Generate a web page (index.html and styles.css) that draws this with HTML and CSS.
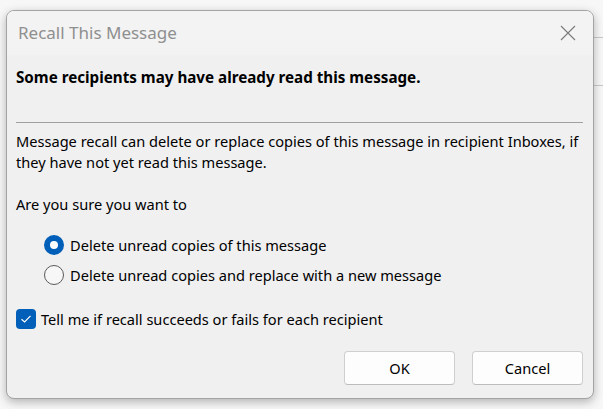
FILE: index.html
```html
<!DOCTYPE html>
<html lang="en">
<head>
<meta charset="utf-8">
<title>Recall This Message</title>
<link rel="stylesheet" href="styles.css">
</head>
<body>
<div class="desktop">
  <svg class="backdrop" width="40" height="80" viewBox="0 0 40 80" aria-hidden="true">
    <line x1="0" y1="7.5" x2="40" y2="7.5" stroke="#c9c9c9" stroke-width="1"/>
    <line x1="0" y1="55.5" x2="40" y2="55.5" stroke="#c9c9c9" stroke-width="1"/>
    <circle cx="8" cy="34" r="8" fill="none" stroke="#a33fc0" stroke-width="1.6"/>
  </svg>
  <div class="dialog">
    <div class="titlebar">
      <span class="title">Recall This Message</span>
      <svg class="close" width="16" height="16" viewBox="0 0 16 16" aria-hidden="true">
        <path d="M1 1 L15 15 M15 1 L1 15" stroke="#7a7a7a" stroke-width="1.1" fill="none"/>
      </svg>
    </div>
    <div class="content">
      <p class="heading">Some recipients may have already read this message.</p>
      <hr class="sep">
      <p class="text">Message recall can delete or replace copies of this message in recipient Inboxes, if they have not yet read this message.</p>
      <p class="text ask">Are you sure you want to</p>
      <div class="options">
        <label class="option"><span class="radio checked"></span>Delete unread copies of this message</label>
        <label class="option"><span class="radio"></span>Delete unread copies and replace with a new message</label>
      </div>
      <label class="check-row"><span class="checkbox">
        <svg width="12" height="10" viewBox="0 0 12 10" aria-hidden="true"><path d="M1.5 5.2 L4.6 8 L10.5 1.8" stroke="#fff" stroke-width="1.2" fill="none"/></svg>
      </span>Tell me if recall succeeds or fails for each recipient</label>
      <div class="buttons">
        <button class="btn">OK</button>
        <button class="btn">Cancel</button>
      </div>
    </div>
  </div>
</div>
</body>
</html>
```
FILE: styles.css
```css
* { box-sizing: border-box; }
html, body { margin: 0; padding: 0; }
body {
  background: #f7f7f7;
  font-family: "Noto Sans", "Open Sans", sans-serif;
  font-size: 14.6px;
  color: #000;
  width: 603px;
  height: 409px;
  overflow: hidden;
}
.desktop {
  position: relative;
  padding: 10px 0 0 6px;
  height: 409px;
}
.backdrop {
  position: absolute;
  left: 563px;
  top: 30px;
}
.dialog {
  position: relative;
  width: 588px;
  height: 389px;
  border: 1px solid #a3a3a3;
  border-radius: 8px;
  background: #f0f0f0;
  box-shadow: 0 3px 10px rgba(0,0,0,0.28);
  overflow: hidden;
  display: flex;
  flex-direction: column;
}
.titlebar {
  height: 44px;
  background: #f3f3f3;
  display: flex;
  align-items: center;
  justify-content: space-between;
  padding: 0 17px 0 11px;
}
.title {
  color: #8f8f8f;
  font-size: 17px;
  margin-top: -1px;
}
.close { margin-top: -1px; }
.content {
  padding: 0 10px 0 9px;
  display: flex;
  flex-direction: column;
}
.heading {
  margin: 11px 0 0;
  font-weight: bold;
  font-size: 15.2px;
  line-height: 23px;
}
.sep {
  margin: 33px 0 0;
  border: 0;
  border-top: 1px solid #a0a0a0;
  height: 0;
}
.text {
  margin: 8px 0 0;
  line-height: 21px;
}
.ask { margin-top: 21px; }
.options {
  display: flex;
  flex-direction: column;
  gap: 10px;
  padding-left: 28px;
  margin-top: 20px;
}
.option, .check-row {
  display: flex;
  align-items: center;
  gap: 6px;
  line-height: 20px;
}
.radio {
  width: 20px;
  height: 20px;
  border-radius: 50%;
  border: 1px solid #5a5a5a;
  background: #f7f7f7;
  flex: none;
}
.radio.checked {
  border: 6px solid #005fb8;
  background: #fff;
}
.check-row {
  margin-top: 24px;
  gap: 5px;
}
.checkbox {
  width: 20px;
  height: 20px;
  border-radius: 4px;
  background: #005fb8;
  display: flex;
  align-items: center;
  justify-content: center;
  flex: none;
}
.buttons {
  display: flex;
  justify-content: flex-end;
  gap: 17px;
  margin-top: 22px;
}
.btn {
  width: 111px;
  height: 34px;
  background: #fdfdfd;
  border: 1px solid #cfcfcf;
  border-bottom-color: #bdbdbd;
  border-radius: 4px;
  font-family: inherit;
  font-size: 14.6px;
  color: #000;
}
```
